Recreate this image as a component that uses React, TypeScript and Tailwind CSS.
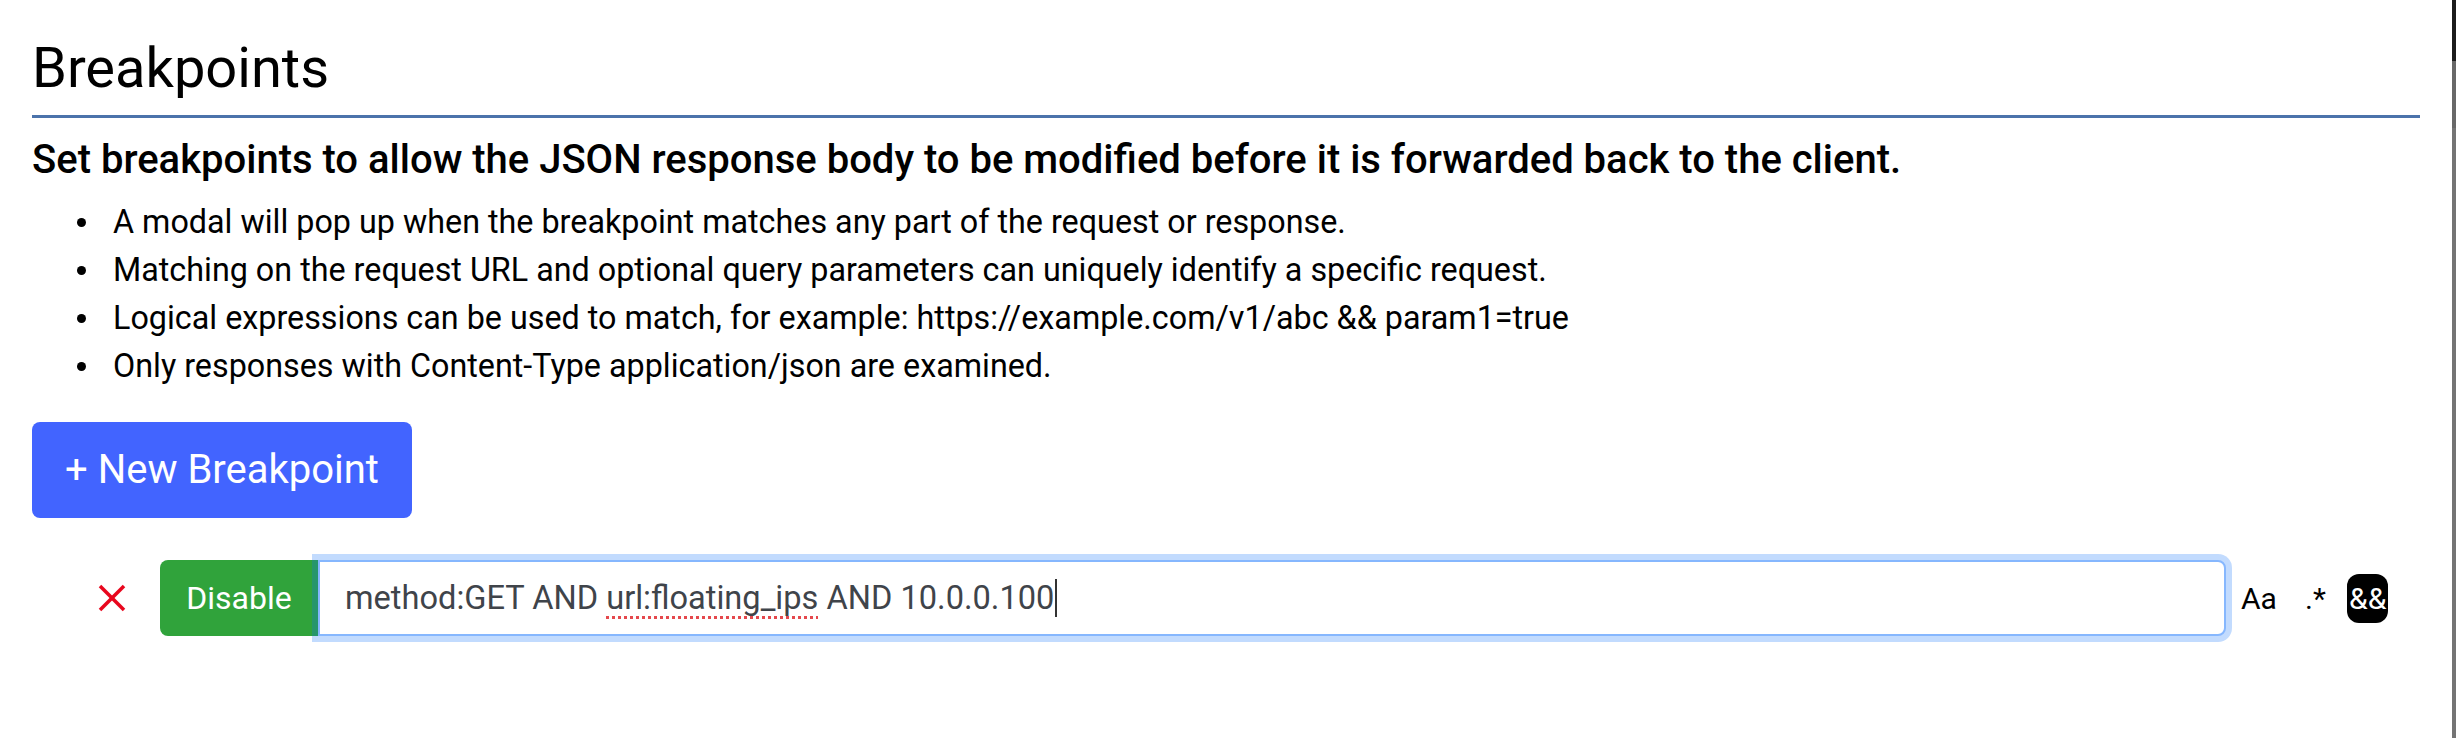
import React from "react";

const bullets = [
  "A modal will pop up when the breakpoint matches any part of the request or response.",
  "Matching on the request URL and optional query parameters can uniquely identify a specific request.",
  "Logical expressions can be used to match, for example: https://example.com/v1/abc && param1=true",
  "Only responses with Content-Type application/json are examined.",
];

export default function App() {
  return (
    <div className="flex w-full h-[738px] bg-white overflow-hidden font-['Roboto','Liberation_Sans',sans-serif] text-black">
      <main className="flex-1 min-w-0 px-8 pt-[35px]">
        <h3 className="text-[56px] leading-[67px] font-normal pb-[13px] border-b-[3px] border-[#4b73ab]">
          Breakpoints
        </h3>
        <h5 className="mt-[20px] text-[40px] leading-[43px] font-medium">
          Set breakpoints to allow the JSON response body to be modified before it is forwarded back to the client.
        </h5>
        <ul className="mt-[17px] flex flex-col">
          {bullets.map((b) => (
            <li key={b} className="flex items-center h-[48px] text-[32.3px] leading-[48px]">
              <span className="ml-[45px] w-[9px] h-[9px] rounded-full bg-black shrink-0" />
              <span className="ml-[27px] whitespace-nowrap">{b}</span>
            </li>
          ))}
        </ul>
        <button className="mt-[32px] h-[96px] w-[380px] rounded-[8px] bg-[#4264ff] text-white text-[40px] leading-[48px] flex items-center justify-center">
          + New Breakpoint
        </button>
        <div className="mt-[42px] flex items-center h-[76px]">
          <div className="w-[128px] flex justify-end pr-[34px]">
            <svg width="28" height="28" viewBox="0 0 28 28">
              <line x1="2" y1="2" x2="26" y2="26" stroke="#e8061d" strokeWidth="3.5" />
              <line x1="26" y1="2" x2="2" y2="26" stroke="#e8061d" strokeWidth="3.5" />
            </svg>
          </div>
          <button className="w-[158px] h-[76px] rounded-l-[8px] bg-[#30a33b] text-white text-[32px] flex items-center justify-center shrink-0">
            Disable
          </button>
          <div className="relative z-10 flex-1 min-w-0 h-[76px] border-2 border-[#86b7fe] rounded-r-[8px] shadow-[0_0_0_6px_rgba(13,110,253,0.25)] bg-white flex items-center pl-[25px] text-[32.6px] text-[#3f444a]">
            <span className="whitespace-pre">
              method:GET AND{" "}
              <span className="underline decoration-dotted decoration-[#e5484d] decoration-[3px] underline-offset-[7px]">url:floating_ips</span>
              {" "}AND 10.0.0.100
            </span>
            <span className="inline-block w-[2px] h-[38px] bg-[#333] ml-[1px]" />
          </div>
          <div className="w-[64px] pl-[15px] text-[30px] shrink-0">Aa</div>
          <div className="w-[57px] pl-[15px] text-[30px] shrink-0">.*</div>
          <div className="w-[41px] h-[49px] rounded-[12px] bg-black text-white text-[30px] leading-[49px] pl-[2px] whitespace-nowrap overflow-visible shrink-0">
            &amp;&amp;
          </div>
          <div className="w-[32px] shrink-0" />
        </div>
      </main>
      <div className="w-[4px] h-full flex flex-col shrink-0">
        <div className="h-[61px] bg-[#1c1c1c]" />
        <div className="h-[67px] bg-[#686868]" />
        <div className="flex-1 bg-[#747474]" />
      </div>
    </div>
  );
}
